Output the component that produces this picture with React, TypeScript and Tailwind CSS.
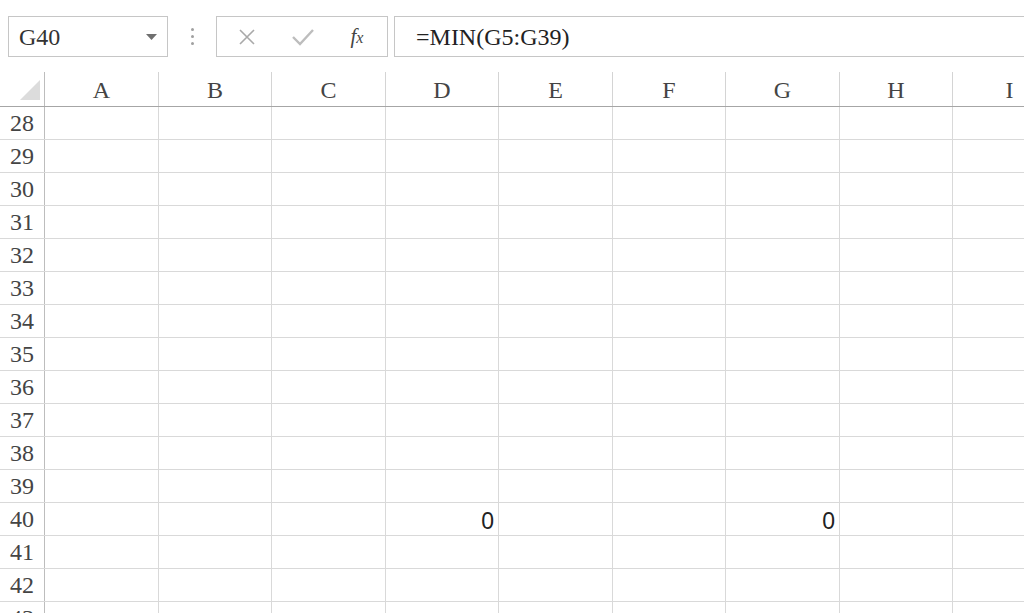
import React from "react";

const serif = { fontFamily: '"Liberation Serif", "Times New Roman", serif' };
const sans = { fontFamily: '"Liberation Sans", Arial, sans-serif' };

const columns = [
  { name: "A", w: "w-[114px]" },
  { name: "B", w: "w-[113px]" },
  { name: "C", w: "w-[114px]" },
  { name: "D", w: "w-[113px]" },
  { name: "E", w: "w-[114px]" },
  { name: "F", w: "w-[113px]" },
  { name: "G", w: "w-[114px]" },
  { name: "H", w: "w-[113px]" },
  { name: "I", w: "w-[114px]" },
];

const rows = [28, 29, 30, 31, 32, 33, 34, 35, 36, 37, 38, 39, 40, 41, 42, 43];

// row 40 holds the MIN results
const values: Record<string, string> = { "D40": "0", "G40": "0" };

const Toolbar = () => (
  <div className="flex h-[72px] items-start pt-4 pl-2 bg-white">
    {/* Name box */}
    <div className="flex h-[41px] w-[160px] items-center justify-between border border-[#c6c6c6] pl-[10px] pr-[10px]">
      <span className="text-[24px] text-[#333] leading-none" style={serif}>G40</span>
      <svg width="11" height="6" viewBox="0 0 11 6">
        <path d="M0 0 L11 0 L5.5 6 Z" fill="#6f6f6f" />
      </svg>
    </div>

    {/* splitter dots */}
    <div className="flex h-[41px] w-[48px] flex-col items-center justify-center gap-[4px]">
      <span className="h-[3px] w-[3px] rounded-full bg-[#a0a0a0]" />
      <span className="h-[3px] w-[3px] rounded-full bg-[#a0a0a0]" />
      <span className="h-[3px] w-[3px] rounded-full bg-[#a0a0a0]" />
    </div>

    {/* cancel / enter / fx */}
    <div className="flex h-[41px] w-[172px] items-center border border-[#c6c6c6]">
      <div className="flex w-[58px] justify-center pl-[2px]">
        <svg width="18" height="18" viewBox="0 0 18 18">
          <path d="M2 2 L16 16 M16 2 L2 16" stroke="#a9a9a9" strokeWidth="1.6" />
        </svg>
      </div>
      <div className="flex w-[56px] justify-center">
        <svg width="22" height="18" viewBox="0 0 22 18">
          <path d="M1 9 L8 16 L21 2" stroke="#bdbdbd" strokeWidth="2.4" fill="none" />
        </svg>
      </div>
      <div className="flex w-[56px] justify-center pr-[4px]">
        <span className="text-[21px] italic text-[#444] leading-none" style={serif}>
          f<span className="text-[16px]">x</span>
        </span>
      </div>
    </div>

    {/* formula bar */}
    <div className="ml-[6px] flex h-[41px] flex-1 items-center border border-r-0 border-[#c6c6c6] pl-[21px]">
      <span className="text-[24px] text-[#222] leading-none" style={serif}>=MIN(G5:G39)</span>
    </div>
  </div>
);

const HeaderRow = () => (
  <div className="flex h-[35px] border-b border-[#a6a6a6] bg-white">
    <div className="relative w-[45px] shrink-0 border-r border-[#bdbdbd]">
      <svg className="absolute left-[20px] top-[8px]" width="20" height="20" viewBox="0 0 20 20">
        <path d="M20 0 L20 20 L0 20 Z" fill="#dcdcdc" />
      </svg>
    </div>
    {columns.map((c) => (
      <div
        key={c.name}
        className={`${c.w} shrink-0 flex items-center justify-center border-r border-[#d4d4d4] pt-[2px] text-[24px] text-[#444]`}
        style={serif}
      >
        {c.name}
      </div>
    ))}
  </div>
);

export default function App() {
  return (
    <div className="h-[613px] w-[1024px] overflow-hidden bg-white">
      <Toolbar />
      <HeaderRow />
      {rows.map((r) => (
        <div key={r} className="flex h-[33px] border-b border-[#d9d9d9]">
          <div
            className="flex w-[45px] shrink-0 items-center justify-center border-r border-[#bdbdbd] text-[24px] text-[#444]"
            style={serif}
          >
            {r}
          </div>
          {columns.map((c) => (
            <div
              key={c.name}
              className={`${c.w} shrink-0 flex items-end justify-end border-r border-[#d9d9d9] pr-[4px] pb-[2px] text-[23px] leading-none text-[#222]`}
              style={sans}
            >
              {values[`${c.name}${r}`] ?? ""}
            </div>
          ))}
        </div>
      ))}
    </div>
  );
}
